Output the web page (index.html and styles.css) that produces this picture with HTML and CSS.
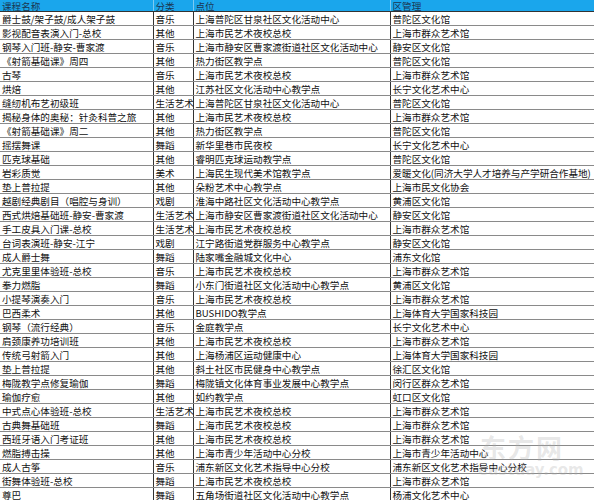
FILE: index.html
```html
<!DOCTYPE html>
<html lang="zh">
<head>
<meta charset="utf-8">
<link rel="stylesheet" href="styles.css">
</head>
<body>
<div class="sheet">
<table class="grid">
<colgroup><col class="c1"><col class="c2"><col class="c3"><col class="c4"></colgroup>
<thead>
<tr><th>课程名称</th><th>分类</th><th>点位</th><th>区管理</th></tr>
</thead>
<tbody>
<tr><td>爵士鼓/架子鼓/成人架子鼓</td><td>音乐</td><td>上海普陀区甘泉社区文化活动中心</td><td>普陀区文化馆</td></tr>
<tr><td>影视配音表演入门-总校</td><td>其他</td><td>上海市民艺术夜校总校</td><td>上海市群众艺术馆</td></tr>
<tr><td>钢琴入门班-静安-曹家渡</td><td>音乐</td><td>上海市静安区曹家渡街道社区文化活动中心</td><td>静安区文化馆</td></tr>
<tr><td>《射箭基础课》周四</td><td>其他</td><td>热力街区教学点</td><td>普陀区文化馆</td></tr>
<tr><td>古琴</td><td>音乐</td><td>上海市民艺术夜校总校</td><td>上海市群众艺术馆</td></tr>
<tr><td>烘焙</td><td>其他</td><td>江苏社区文化活动中心教学点</td><td>长宁文化艺术中心</td></tr>
<tr><td>缝纫机布艺初级班</td><td>生活艺术</td><td>上海普陀区甘泉社区文化活动中心</td><td>普陀区文化馆</td></tr>
<tr><td>揭秘身体的奥秘：针灸科普之旅</td><td>其他</td><td>上海市民艺术夜校总校</td><td>上海市群众艺术馆</td></tr>
<tr><td>《射箭基础课》周二</td><td>其他</td><td>热力街区教学点</td><td>普陀区文化馆</td></tr>
<tr><td>摇摆舞课</td><td>舞蹈</td><td>新华里巷市民夜校</td><td>长宁文化艺术中心</td></tr>
<tr><td>匹克球基础</td><td>其他</td><td>睿明匹克球运动教学点</td><td>普陀区文化馆</td></tr>
<tr><td>岩彩质觉</td><td>美术</td><td>上海民生现代美术馆教学点</td><td>爱暖文化(同济大学人才培养与产学研合作基地)</td></tr>
<tr><td>垫上普拉提</td><td>其他</td><td>朵粉艺术中心教学点</td><td>上海市民文化协会</td></tr>
<tr><td>越剧经典剧目（唱腔与身训）</td><td>戏剧</td><td>淮海中路社区文化活动中心教学点</td><td>黄浦区文化馆</td></tr>
<tr><td>西式烘焙基础班-静安-曹家渡</td><td>生活艺术</td><td>上海市静安区曹家渡街道社区文化活动中心</td><td>静安区文化馆</td></tr>
<tr><td>手工皮具入门课-总校</td><td>生活艺术</td><td>上海市民艺术夜校总校</td><td>上海市群众艺术馆</td></tr>
<tr><td>台词表演班-静安-江宁</td><td>戏剧</td><td>江宁路街道党群服务中心教学点</td><td>静安区文化馆</td></tr>
<tr><td>成人爵士舞</td><td>舞蹈</td><td>陆家嘴金融城文化中心</td><td>浦东文化馆</td></tr>
<tr><td>尤克里里体验班-总校</td><td>音乐</td><td>上海市民艺术夜校总校</td><td>上海市群众艺术馆</td></tr>
<tr><td>拳力燃脂</td><td>舞蹈</td><td>小东门街道社区文化活动中心教学点</td><td>黄浦区文化馆</td></tr>
<tr><td>小提琴演奏入门</td><td>音乐</td><td>上海市民艺术夜校总校</td><td>上海市群众艺术馆</td></tr>
<tr><td>巴西柔术</td><td>其他</td><td>BUSHIDO教学点</td><td>上海体育大学国家科技园</td></tr>
<tr><td>钢琴（流行经典）</td><td>音乐</td><td>金庭教学点</td><td>长宁文化艺术中心</td></tr>
<tr><td>肩颈康养功培训班</td><td>其他</td><td>上海市民艺术夜校总校</td><td>上海市群众艺术馆</td></tr>
<tr><td>传统弓射箭入门</td><td>其他</td><td>上海杨浦区运动健康中心</td><td>上海体育大学国家科技园</td></tr>
<tr><td>垫上普拉提</td><td>其他</td><td>斜土社区市民健身中心教学点</td><td>徐汇区文化馆</td></tr>
<tr><td>梅陇教学点修复瑜伽</td><td>舞蹈</td><td>梅陇镇文化体育事业发展中心教学点</td><td>闵行区群众艺术馆</td></tr>
<tr><td>瑜伽疗愈</td><td>其他</td><td>如约教学点</td><td>虹口区文化馆</td></tr>
<tr><td>中式点心体验班-总校</td><td>生活艺术</td><td>上海市民艺术夜校总校</td><td>上海市群众艺术馆</td></tr>
<tr><td>古典舞基础班</td><td>舞蹈</td><td>上海市民艺术夜校总校</td><td>上海市群众艺术馆</td></tr>
<tr><td>西班牙语入门考证班</td><td>其他</td><td>上海市民艺术夜校总校</td><td>上海市群众艺术馆</td></tr>
<tr><td>燃脂搏击操</td><td>其他</td><td>上海市青少年活动中心分校</td><td>上海市青少年活动中心</td></tr>
<tr><td>成人古筝</td><td>音乐</td><td>浦东新区文化艺术指导中心分校</td><td>浦东新区文化艺术指导中心分校</td></tr>
<tr><td>街舞体验班-总校</td><td>舞蹈</td><td>上海市民艺术夜校总校</td><td>上海市群众艺术馆</td></tr>
<tr><td>尊巴</td><td>舞蹈</td><td>五角场街道社区文化活动中心教学点</td><td>杨浦文化艺术中心</td></tr>
</tbody>
</table>
<div class="watermark" aria-hidden="true">
<span class="wm-cn">东方网</span>
<span class="wm-en">eastday.com</span>
</div>
</div>
</body>
</html>
```

FILE: styles.css
```css
html, body {
  margin: 0;
  padding: 0;
  background: #ffffff;
}
.sheet {
  position: relative;
  width: 594px;
  height: 500px;
  overflow: hidden;
}
.grid {
  border-collapse: collapse;
  table-layout: fixed;
  width: 596px;
  font-family: "Noto Sans CJK SC", "Noto Sans", sans-serif;
  font-size: 9.6px;
  color: #111;
}
.c1 { width: 153px; }
.c2 { width: 40px; }
.c3 { width: 197px; }
.c4 { width: 206px; }
.grid th, .grid td {
  padding: 0 0 0 2px;
  white-space: nowrap;
  overflow: visible;
  text-align: left;
  font-weight: 400;
  line-height: 12px;
}
.grid th {
  height: 11px;
  line-height: 10px;
  background: #1aa6ec;
  color: #1b3550;
  border-left: 1px solid #7ccaf2;
  border-bottom: 1px solid #333;
}
.grid th:first-child { border-left: none; }
.grid td {
  height: 13px;
  border-bottom: 1px solid #8a8a8a;
  border-left: 1px solid #333;
}
.grid td:first-child { border-left: none; }
.watermark {
  position: absolute;
  left: 470px;
  top: 432px;
  width: 110px;
  display: flex;
  flex-direction: column;
  align-items: flex-start;
  color: rgba(175, 175, 175, 0.3);
  font-family: "Noto Sans CJK SC", sans-serif;
  pointer-events: none;
}
.wm-cn {
  font-size: 26px;
  font-weight: 700;
  line-height: 30px;
  letter-spacing: 2px;
  padding-left: 10px;
}
.wm-en {
  font-family: "DejaVu Sans", sans-serif;
  font-size: 15px;
  font-weight: 700;
  line-height: 16px;
  padding-left: 8px;
}
```
